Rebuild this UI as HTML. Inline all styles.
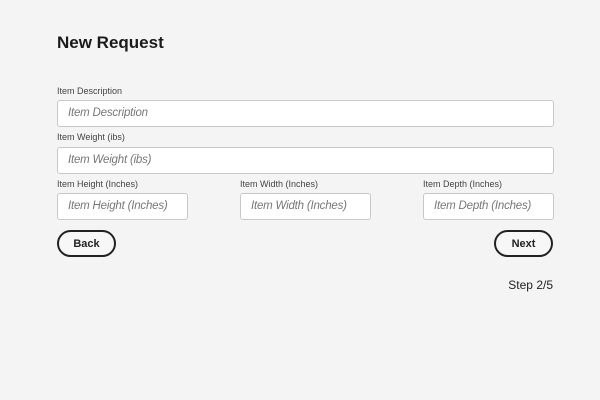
<!DOCTYPE html><html><head><style>
body{margin:0;width:600px;height:400px;background:#f4f4f4;font-family:"Liberation Sans",sans-serif;position:relative;color:#222;overflow:hidden}
.a{position:absolute}
h1{position:absolute;left:57px;top:33px;margin:0;font-size:17px;font-weight:bold;color:#1a1a1a}
.l{position:absolute;font-size:9px;color:#444}
.i{position:absolute;background:#fff;border:1px solid #c8c8c8;border-radius:3px;box-sizing:border-box;height:27px;font-size:11.5px;font-style:italic;color:#777;padding-left:10px;line-height:25px;letter-spacing:-0.2px}
.b{position:absolute;border:2px solid #222;border-radius:14px;box-sizing:border-box;height:27px;width:59px;text-align:center;line-height:24px;font-size:11px;font-weight:bold;background:#f7f7f7}
</style></head><body>
<h1>New Request</h1>
<div class="l" style="left:57px;top:86px">Item Description</div>
<div class="i" style="left:57px;top:100px;width:497px">Item Description</div>
<div class="l" style="left:57px;top:132px">Item Weight (ibs)</div>
<div class="i" style="left:57px;top:147px;width:497px">Item Weight (ibs)</div>
<div class="l" style="left:57px;top:179px">Item Height (Inches)</div>
<div class="l" style="left:240px;top:179px">Item Width (Inches)</div>
<div class="l" style="left:423px;top:179px">Item Depth (Inches)</div>
<div class="i" style="left:57px;top:193px;width:131px">Item Height (Inches)</div>
<div class="i" style="left:240px;top:193px;width:131px">Item Width (Inches)</div>
<div class="i" style="left:423px;top:193px;width:131px">Item Depth (Inches)</div>
<div class="b" style="left:57px;top:230px">Back</div>
<div class="b" style="left:494px;top:230px">Next</div>
<div class="a" style="right:47px;top:278px;font-size:12px;color:#222">Step 2/5</div>
</body></html>
